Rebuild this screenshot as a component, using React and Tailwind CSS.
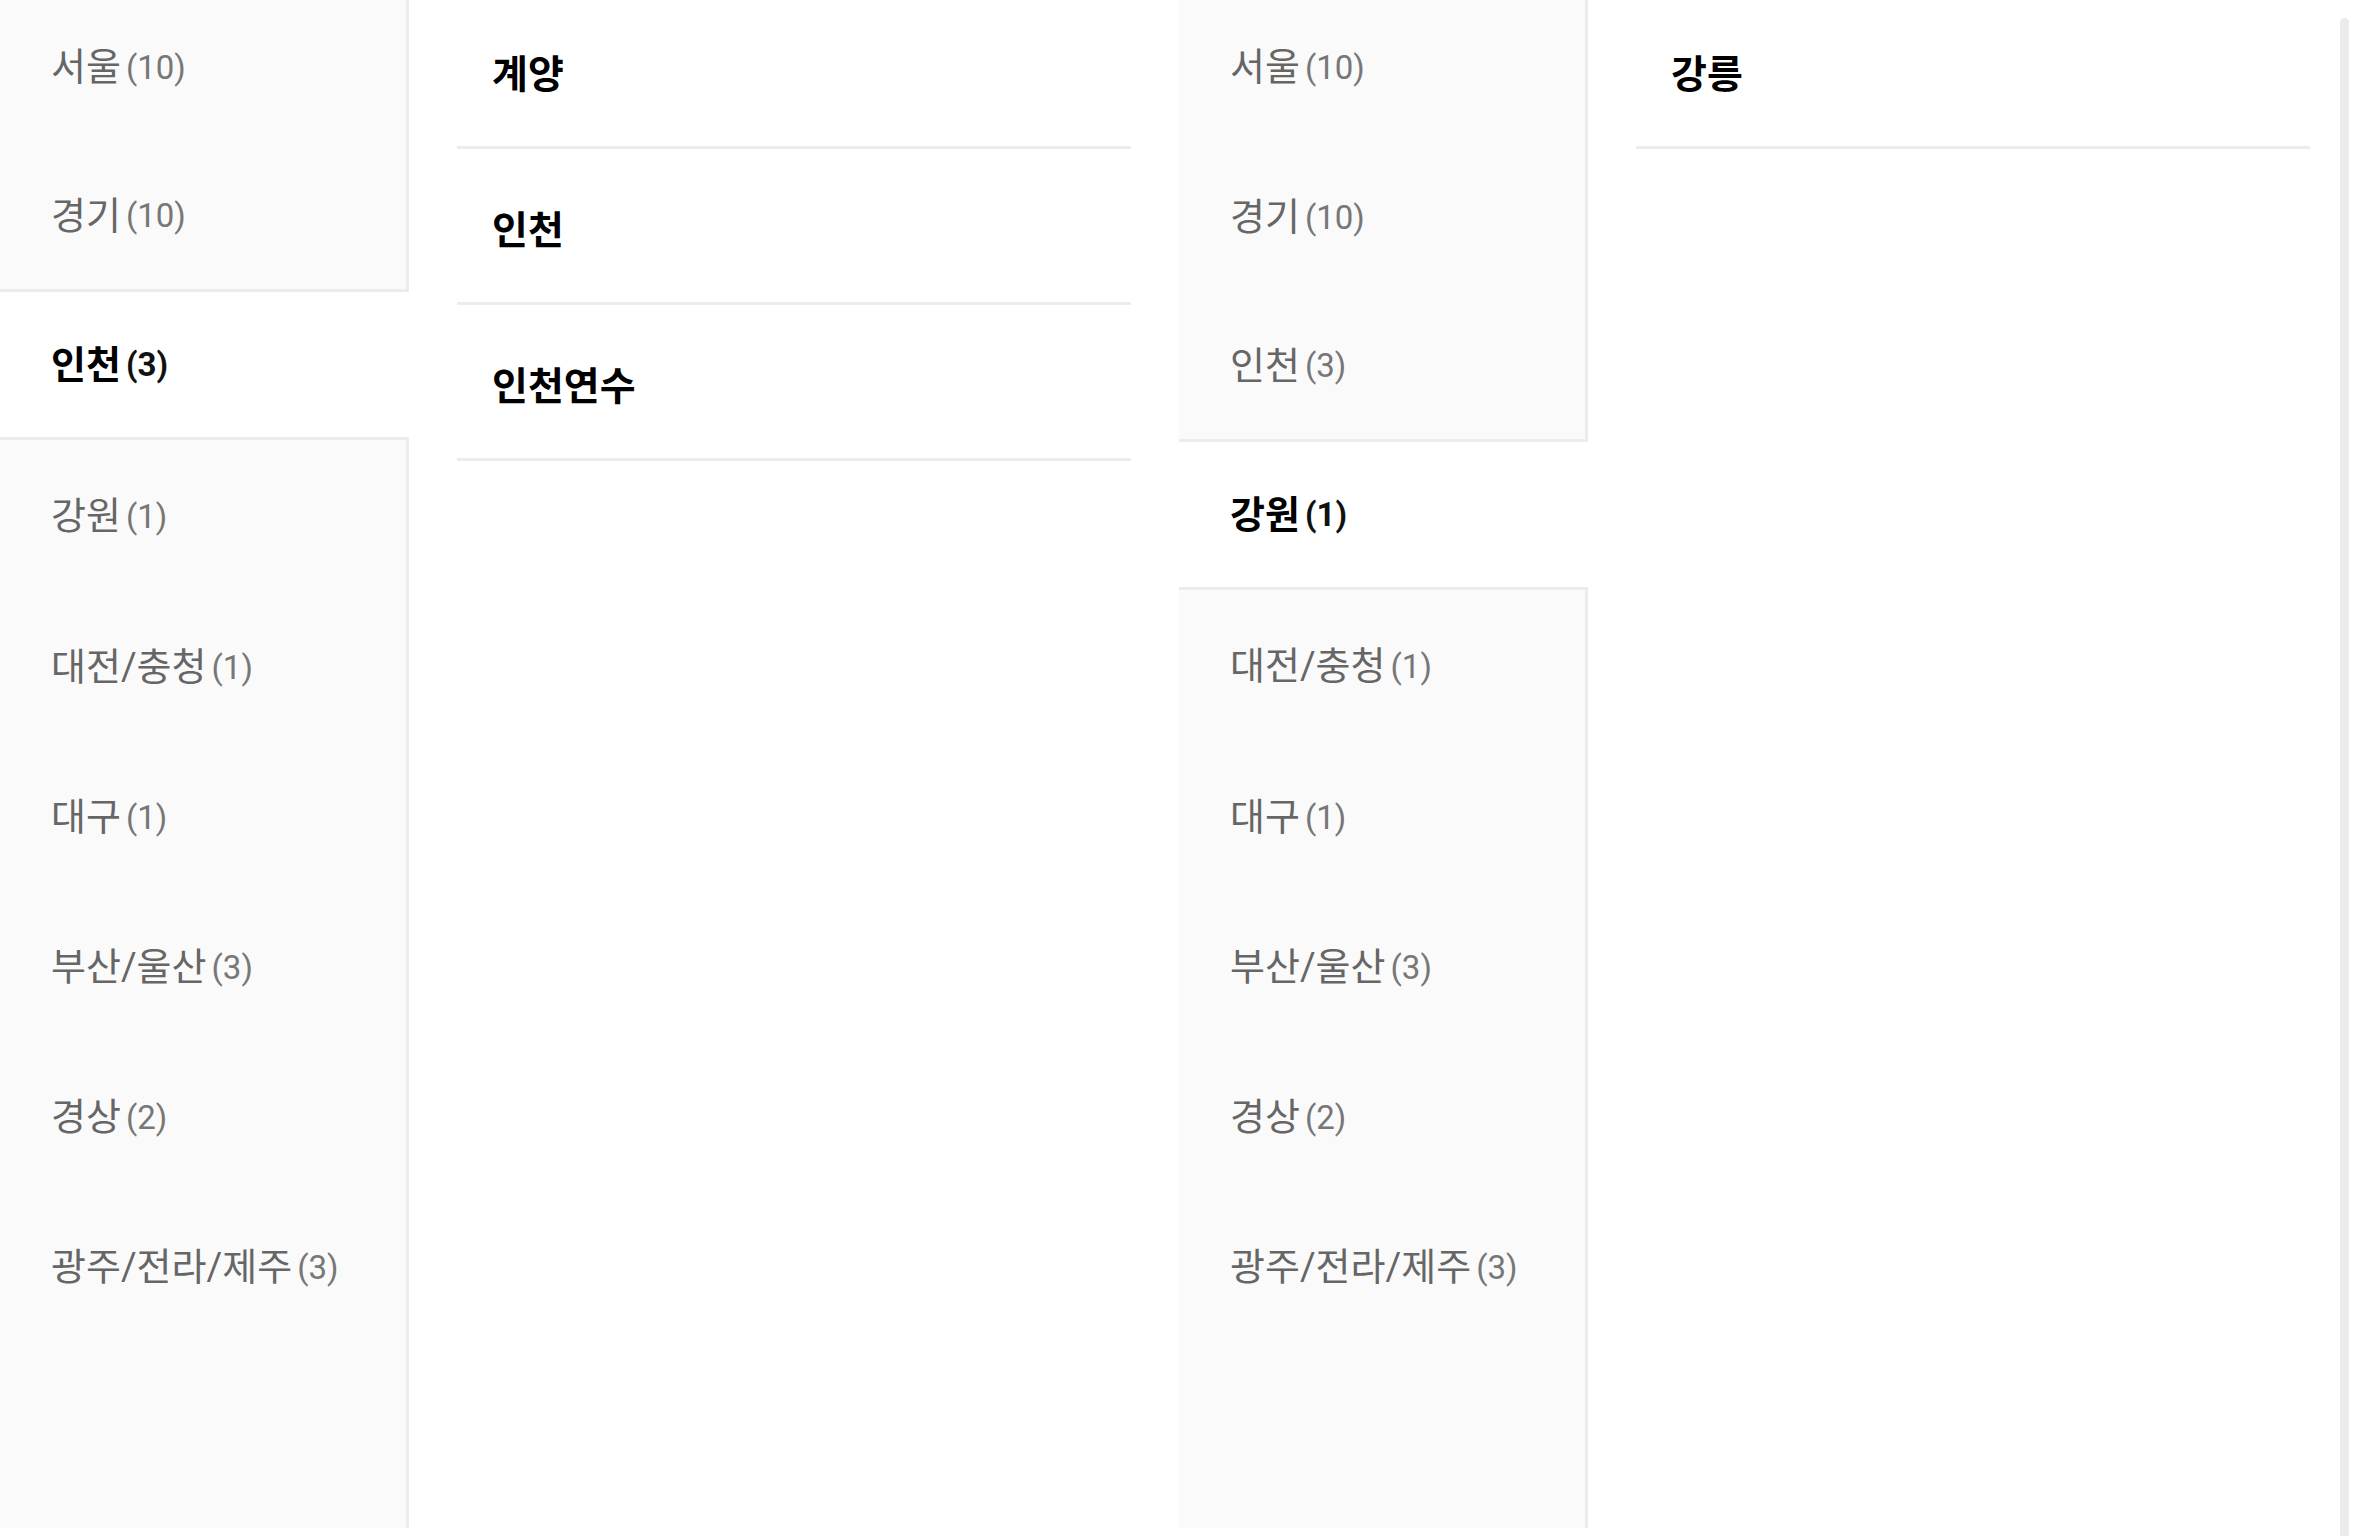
import React from 'react';

const regions = [
    { name: '서울', count: 10 },
    { name: '경기', count: 10 },
    { name: '인천', count: 3 },
    { name: '강원', count: 1 },
    { name: '대전/충청', count: 1 },
    { name: '대구', count: 1 },
    { name: '부산/울산', count: 3 },
    { name: '경상', count: 2 },
    { name: '광주/전라/제주', count: 3 },
];

const RegionRow = ({ name, count, index, selected }) => {
    const isSelected = index === selected;
    const above = index === selected - 1;
    const below = index === selected + 1;

    let rowClass = 'h-[150px] bg-[#fafafa] border-r-[3px] border-[#ececec]';
    if (isSelected) rowClass = 'h-[145px] bg-white';
    else if (above) rowClass = 'h-[150px] bg-[#fafafa] border-r-[3px] border-b-[3px] border-[#ececec]';
    else if (below) rowClass = 'h-[155px] bg-[#fafafa] border-r-[3px] border-t-[3px] border-[#ececec]';

    return (
        <div className={`flex items-center shrink-0 pl-[51px] ${rowClass}`}>
            <span className={`text-[38px] leading-none ${isSelected ? 'font-bold text-black' : 'text-[#666666]'}`}>
                {name}
            </span>
            <span className={`ml-[5px] text-[33px] leading-none ${isSelected ? 'font-bold text-[#111111]' : 'text-[#777777]'}`}>
                ({count})
            </span>
        </div>
    );
};

const Panel = ({ selected, subs }) => {
    return (
        <div className="flex h-full">
            <div className="flex flex-col w-[409px] h-full -mt-[8px]">
                {regions.map((r, i) => (
                    <RegionRow key={r.name} {...r} index={i} selected={selected} />
                ))}
                <div className="flex-1 bg-[#fafafa] border-r-[3px] border-[#ececec]" />
            </div>
            <div className="flex flex-col w-[674px] ml-[48px] -mt-[7px]">
                {subs.map((s) => (
                    <div
                        key={s}
                        className="flex items-center h-[156px] pl-[35px] pt-[12px] border-b-[3px] border-[#ececec]"
                    >
                        <span className="text-[39px] leading-none font-bold text-black">{s}</span>
                    </div>
                ))}
            </div>
        </div>
    );
};

export default function App() {
    return (
        <div className="flex w-[2358px] h-[1536px] overflow-hidden bg-white font-[family-name:Roboto,'Noto_Sans_CJK_KR',sans-serif]">
            <Panel selected={2} subs={['계양', '인천', '인천연수']} />
            <div className="w-[48px] shrink-0" />
            <Panel selected={3} subs={['강릉']} />
            <div className="w-[9px] ml-[30px] mt-[18px] h-full rounded-t-full bg-[#ebebeb]" />
        </div>
    );
}
